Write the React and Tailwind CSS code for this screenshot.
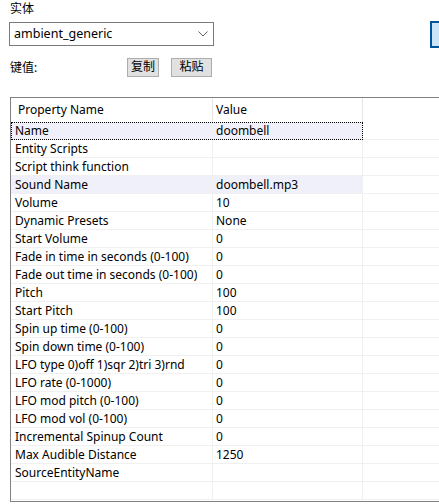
import React from 'react';

const rows = [
  ['Name', 'doombell'],
  ['Entity Scripts', ''],
  ['Script think function', ''],
  ['Sound Name', 'doombell.mp3'],
  ['Volume', '10'],
  ['Dynamic Presets', 'None'],
  ['Start Volume', '0'],
  ['Fade in time in seconds (0-100)', '0'],
  ['Fade out time in seconds (0-100)', '0'],
  ['Pitch', '100'],
  ['Start Pitch', '100'],
  ['Spin up time (0-100)', '0'],
  ['Spin down time (0-100)', '0'],
  ['LFO type 0)off 1)sqr 2)tri 3)rnd', '0'],
  ['LFO rate (0-1000)', '0'],
  ['LFO mod pitch (0-100)', '0'],
  ['LFO mod vol (0-100)', '0'],
  ['Incremental Spinup Count', '0'],
  ['Max Audible Distance', '1250'],
  ['SourceEntityName', ''],
  ['', ''],
];

const font = { fontFamily: '"Noto Sans", "Noto Sans CJK SC", sans-serif' };

export default function App() {
  return (
    <div
      className="w-[439px] h-[504px] overflow-hidden bg-white text-[12px] text-black leading-none"
      style={font}
    >
      <div className="w-[520px]">
        {/* Top controls */}
        <div className="flex">
          <div className="pl-[10px] w-[430px] shrink-0">
            <div className="h-[22px] leading-[17px]">实体</div>
            <div className="ml-[-1px] w-[205px] h-[24px] border border-[#7a7a7a] flex items-center justify-between pl-[4px] pr-[5px]">
              <span className="text-[12.5px]">ambient_generic</span>
              <svg width="10" height="6" viewBox="0 0 10 6" fill="none">
                <path d="M0.5 0.5 L5 5 L9.5 0.5" stroke="#606060" strokeWidth="1" />
              </svg>
            </div>
            <div className="flex items-center mt-[11px] h-[20px]">
              <span className="w-[117px] pt-[2px]">键值:</span>
              <button className="w-[32px] h-[19px] bg-[#e1e1e1] border border-[#adadad] flex items-center justify-center">
                复制
              </button>
              <button className="ml-[12px] w-[41px] h-[19px] bg-[#e1e1e1] border border-[#adadad] flex items-center justify-center">
                粘贴
              </button>
            </div>
          </div>
          <div className="mt-[21px] w-[75px] h-[27px] bg-[#cce4f7] border-2 border-[#005499]" />
        </div>

        {/* Property list */}
        <div className="ml-[10px] mt-[20px] h-[405px] border border-[#828282] w-[500px]">
          <div className="flex h-[24px] items-center">
            <div className="w-[201px] pl-[7px] h-full flex items-center">Property Name</div>
            <div className="w-[150px] pl-[3px] h-full flex items-center border-l border-[#e5e5e5]">Value</div>
            <div className="flex-1 h-full border-l border-[#e5e5e5]" />
          </div>
          {rows.map(([k, v], i) => {
            const hl = i === 0 || i === 3;
            return (
              <div key={i} className="relative flex h-[18px]">
                <div className={`w-[201px] pl-[4px] flex items-center border-b border-[#f0f0f0] ${hl ? 'bg-[#f0f0fa]' : ''}`}>
                  {k}
                </div>
                <div className={`w-[150px] pl-[3px] flex items-center border-l border-b border-[#f0f0f0] ${hl ? 'bg-[#f0f0fa]' : ''}`}>
                  {v}
                </div>
                <div className="flex-1 border-l border-b border-[#f0f0f0]" />
                {i === 0 && (
                  <div className="absolute left-0 top-0 w-[352px] h-[18px] border border-dotted border-black pointer-events-none" />
                )}
              </div>
            );
          })}
        </div>
      </div>
    </div>
  );
}
